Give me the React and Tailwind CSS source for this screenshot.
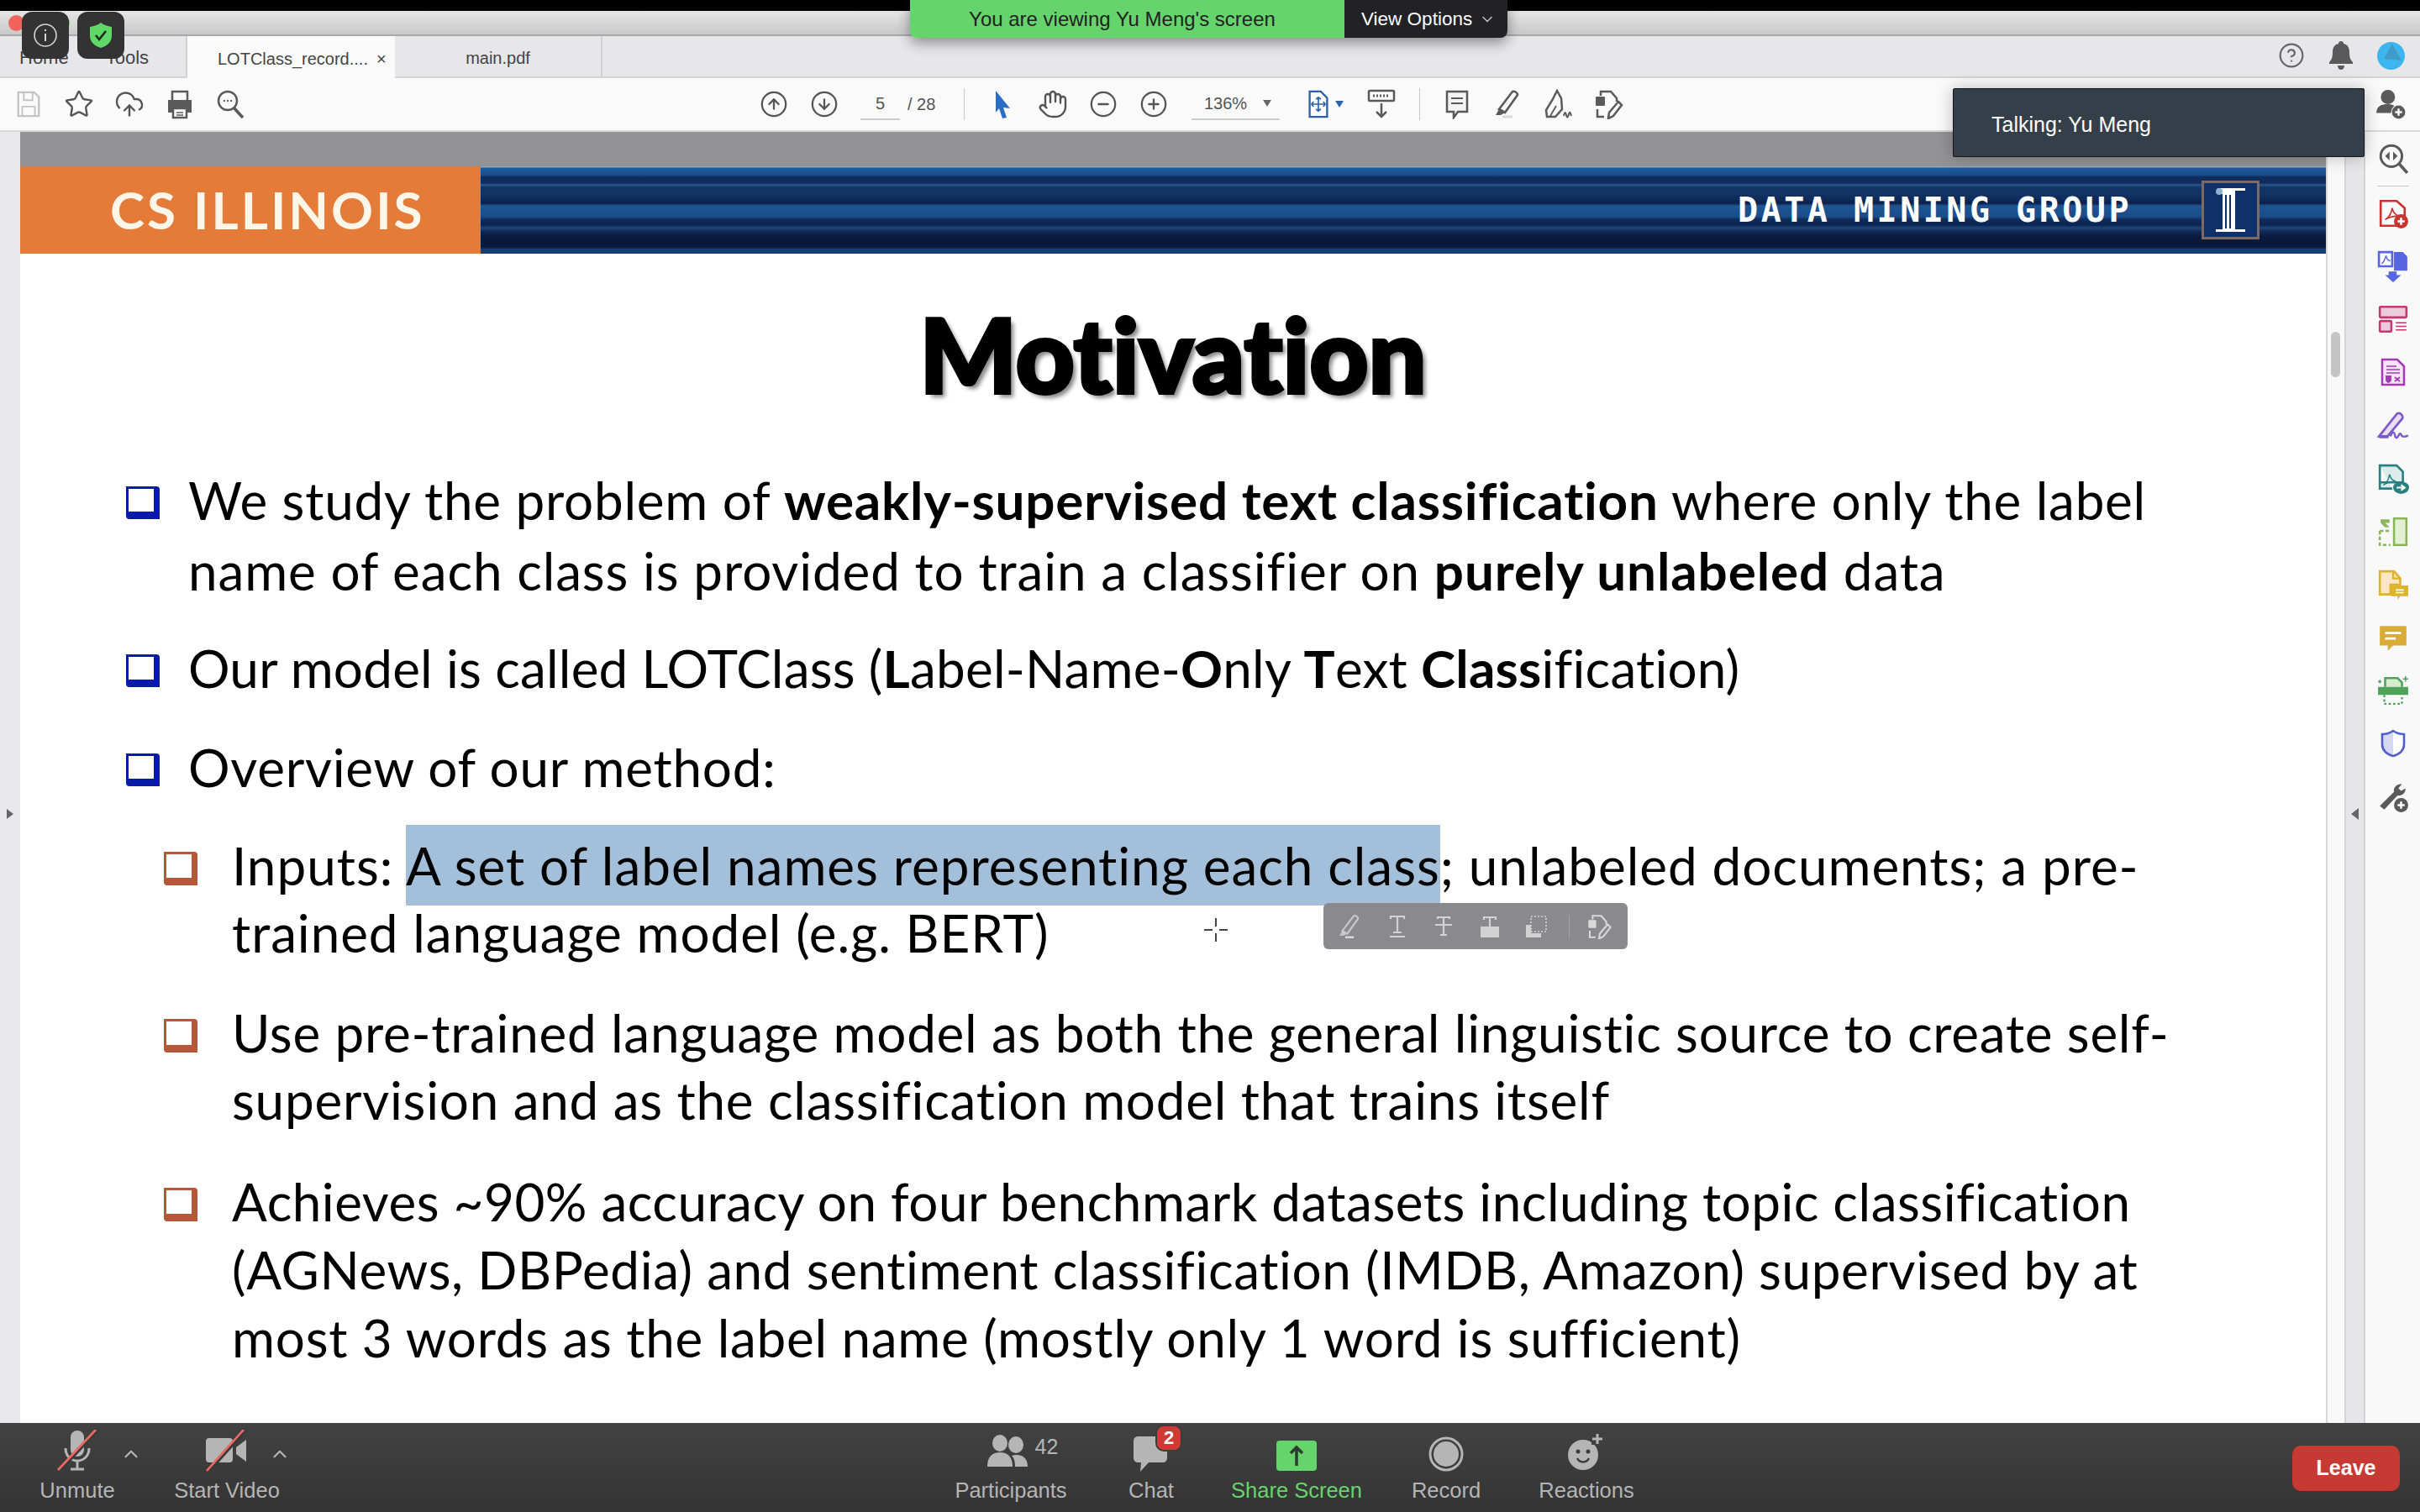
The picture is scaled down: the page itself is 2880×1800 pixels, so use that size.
import React from "react";
import { Star, CloudUpload, CircleArrowUp, CircleArrowDown, Hand, CircleMinus, CirclePlus, ChevronDown, ChevronUp, CircleHelp } from "lucide-react";

const bannerStripes =
  "bg-[linear-gradient(180deg,#8aa8c8_0px,#8aa8c8_1px,#1f5a9c_2px,#1b4f8c_10px,#0f2c5c_13px,#0f2c5c_20px,#2a5a90_22px,#123364_25px,#123364_32px,#0e2a58_40px,#0a1f48_44px,#1d5595_47px,#1a4c88_60px,#0f2c5c_63px,#0c2450_70px,#20457a_73px,#112b58_77px,#0a1a3c_84px,#0a1a3c_96px,#163f74_99px,#163f74_104px)]";

const Svg = ({ size = 36, children, className = "" }) => (
  <svg width={size} height={size} viewBox="0 0 36 36" fill="none" className={className}>
    {children}
  </svg>
);

// pdf toolbar
const SaveIcon = () => (
  <Svg size={34}>
    <path d="M5 3h20l6 6v24H5z" stroke="#c4c4c4" strokeWidth="2.5" />
    <path d="M12 3v10h11V3M10 33V21h16v12" stroke="#c4c4c4" strokeWidth="2" />
  </Svg>
);
const PrintIcon = () => (
  <Svg size={36}>
    <path d="M9 13V3h18v10" stroke="#5a5a5a" strokeWidth="2.5" />
    <path d="M4 13h28v15h-5v-6H9v6H4z" fill="#5a5a5a" />
    <path d="M10 23h16v11H10z" fill="#fff" stroke="#5a5a5a" strokeWidth="2.5" />
    <path d="M14 28h8M14 31h8" stroke="#5a5a5a" strokeWidth="1.5" />
  </Svg>
);
const FindIcon = () => (
  <Svg size={36}>
    <circle cx="15" cy="14" r="11" stroke="#5a5a5a" strokeWidth="2.5" />
    <path d="M22 22l11 12" stroke="#5a5a5a" strokeWidth="3.5" />
    <path d="M10 14h2M14 14h2M18 14h2" stroke="#5a5a5a" strokeWidth="2" />
  </Svg>
);
const CursorIcon = () => (
  <Svg size={36}>
    <path d="M10 2l17 21-8-1 4 12-5 1-4-12-4 5z" fill="#2a6dc4" />
  </Svg>
);
const FitIcon = () => (
  <div className="flex items-center gap-[3px]">
    <Svg size={34}>
      <path d="M7 2h14l8 8v24H7z" fill="#fff" stroke="#2a63a8" strokeWidth="2.5" />
      <path d="M18 9v18M9 18h18M18 9l-3 3M18 9l3 3M18 27l-3-3M18 27l3-3M9 18l3-3M9 18l3 3M27 18l-3-3M27 18l-3 3" stroke="#2a63a8" strokeWidth="1.8" />
    </Svg>
    <span className="w-0 h-0 border-x-[5px] border-x-transparent border-t-[8px] border-t-[#2a63a8]" />
  </div>
);
const KeyboardIcon = () => (
  <Svg size={36}>
    <rect x="3" y="2" width="30" height="12" rx="1" stroke="#5a5a5a" strokeWidth="2.5" />
    <path d="M8 8h20" stroke="#5a5a5a" strokeWidth="3" strokeDasharray="2 2" />
    <path d="M18 17v16M12 27l6 6 6-6" stroke="#5a5a5a" strokeWidth="2.5" />
  </Svg>
);
const CommentIcon = () => (
  <Svg size={36}>
    <path d="M6 3h24v24H19l-5 7v-7H6z" fill="#f4f4f4" stroke="#5a5a5a" strokeWidth="2.5" />
    <path d="M11 11h14M11 17h14" stroke="#5a5a5a" strokeWidth="2" />
  </Svg>
);
const MarkerIcon = ({ color = "#5a5a5a", fill = "none" }) => (
  <Svg size={36}>
    <path d="M8 24L24 3c2-1 6 1 6 4L15 28z" fill={fill} stroke={color} strokeWidth="2.6" />
    <path d="M8 24l7 4-5 3H4z" fill={color} />
    <path d="M12 33h12" stroke="#d8d8d8" strokeWidth="3" />
  </Svg>
);
const SignIcon = () => (
  <Svg size={36}>
    <path d="M17 2l5 9 1 13-8 9H5l-1-8 8-13z" stroke="#5a5a5a" strokeWidth="2.5" />
    <path d="M9 32l7-12" stroke="#5a5a5a" strokeWidth="1.8" />
    <path d="M25 32c1-5 2-5 3-1s2 3 3-1 2-2 3 2" stroke="#5a5a5a" strokeWidth="2" />
  </Svg>
);
const ShareEditIcon = ({ color = "#5a5a5a" }) => (
  <Svg size={36}>
    <rect x="3" y="9" width="11" height="11" rx="1" fill={color} />
    <path d="M9 8V3h12l7 8v4M5 24v9h8" stroke={color} strokeWidth="2.5" />
    <path d="M30 15l4 4-10 13-6 3 1-7z" stroke={color} strokeWidth="2.5" />
  </Svg>
);
const UserPlusIcon = () => (
  <Svg size={38}>
    <circle cx="15" cy="10" r="8" fill="#5a5a5a" />
    <path d="M2 28c0-8 6-10 13-10 3 0 5 .5 7 2l-3 8z" fill="#5a5a5a" />
    <circle cx="27" cy="27" r="8" fill="#5a5a5a" stroke="#fafafa" strokeWidth="1" />
    <path d="M27 23v8M23 27h8" stroke="#fff" strokeWidth="2.2" />
  </Svg>
);

const Vr = () => <div className="w-px h-[38px] bg-[#c8c8c8]" />;

const ToolBtn = ({ children, className = "w-[60px]" }) => (
  <div className={`flex items-center justify-center ${className}`}>{children}</div>
);

// right hand tools column
const sideIcons = [
  <Svg key="a" size={38}>
    <path d="M4 4h18l9 8v20H4z" fill="#fff" stroke="#c8352f" strokeWidth="2.5" />
    <path d="M9 25c4-2 7-7 8-13 1 6 4 8 8 9-5 0-11 1-16 4z" stroke="#c8352f" strokeWidth="1.6" />
    <circle cx="27" cy="27" r="8" fill="#c8352f" />
    <path d="M27 23v8M23 27h8" stroke="#fff" strokeWidth="2.4" />
  </Svg>,
  <Svg key="b" size={38}>
    <path d="M2 2h15v16H2z" fill="#fff" stroke="#5865e0" strokeWidth="2.5" />
    <path d="M19 2h10l5 5v16H19z" fill="#5865e0" />
    <path d="M5 15c3-2 4-5 5-9 1 4 2 5 5 6" stroke="#5865e0" strokeWidth="1.4" />
    <path d="M13 24h9v4h5l-9 8-9-8h4z" fill="#5865e0" />
  </Svg>,
  <Svg key="c" size={38}>
    <rect x="3" y="4" width="30" height="12" rx="1" fill="#eccbdb" stroke="#c8376f" strokeWidth="2.4" />
    <rect x="3" y="20" width="13" height="12" rx="1" fill="#eccbdb" stroke="#c8376f" strokeWidth="2.4" />
    <path d="M21 22h12M21 26h12M21 30h12" stroke="#c8376f" strokeWidth="1.4" />
  </Svg>,
  <Svg key="d" size={36}>
    <path d="M5 3h18l8 8v22H5z" fill="#f3e3f6" stroke="#a43bb5" strokeWidth="2.5" />
    <path d="M10 11h12M10 15h16M10 19h16" stroke="#a43bb5" strokeWidth="1.4" />
    <path d="M10 23h5v5l-2.500 2-2.500-2zM20 24l6 5M26 24l-6 5" stroke="#a43bb5" strokeWidth="1.8" fill="#a43bb5" />
  </Svg>,
  <Svg key="e" size={40}>
    <path d="M3 30L22 6c3-2 7 1 6 5L12 30z" fill="#e8def6" stroke="#7a5ac8" strokeWidth="2.4" />
    <path d="M3 31h10M15 30c3-6 4-5 5-1s3 3 4 0 2-2 3 0 4 2 7 0" stroke="#7a5ac8" strokeWidth="2.2" />
  </Svg>,
  <Svg key="f" size={38}>
    <path d="M3 3h19l7 7v12H3z M3 3v26h14" fill="#dcecec" stroke="#2a8080" strokeWidth="2.5" />
    <path d="M7 25c4-2 6-6 7-12 1 5 3 7 7 8-5 0-10 1-14 4z" stroke="#2a8080" strokeWidth="1.4" />
    <ellipse cx="27" cy="28" rx="9" ry="7" fill="#2a8080" />
    <path d="M22 28h8M27 25l4 3-4 3" stroke="#fff" strokeWidth="2" />
  </Svg>,
  <Svg key="g" size={38}>
    <rect x="19" y="3" width="14" height="30" fill="#e3f0d2" stroke="#8ab55a" strokeWidth="2.4" />
    <path d="M3 17h12M3 17v16h12" stroke="#8ab55a" strokeWidth="2.4" strokeDasharray="4 2.500" />
    <path d="M4 4l10 0v4H9l5 5H9L4 8z" fill="#8ab55a" />
  </Svg>,
  <Svg key="h" size={38}>
    <path d="M3 3h16l7 8v7H15v11H3z" fill="#fbe5c4" stroke="#dcb42e" strokeWidth="2.5" />
    <path d="M18 3v8h8" stroke="#dcb42e" strokeWidth="2.2" />
    <path d="M16 19h19v12H26l-3 4v-4h-7z" fill="#dcb42e" />
    <path d="M21 24h9M21 27h9" stroke="#fff" strokeWidth="1.6" />
  </Svg>,
  <Svg key="i" size={38}>
    <path d="M3 5h30v22H18l-6 6v-6H3z" fill="#d9ac38" />
    <path d="M9 13h18M9 19h12" stroke="#fff" strokeWidth="2.6" />
  </Svg>,
  <Svg key="j" size={38}>
    <path d="M9 14V4h14l5 5v5" fill="#d5eccf" stroke="#4ea25a" strokeWidth="2.4" />
    <path d="M1 14h34v9H1z" fill="#4ea25a" />
    <path d="M8 23v10h20V23" stroke="#4ea25a" strokeWidth="2.2" strokeDasharray="2.500 2.500" />
    <path d="M32 2v6M29 5h6M3 6v4M1 8h4" stroke="#4ea25a" strokeWidth="1.4" />
  </Svg>,
  <Svg key="k" size={36}>
    <path d="M18 3c4 3 8 4 13 4v12c0 8-6 12-13 14z" fill="#fff" />
    <path d="M18 3C14 6 10 7 5 7v12c0 8 6 12 13 14z" fill="#d5d8f2" />
    <path d="M18 3c4 3 8 4 13 4v12c0 8-6 12-13 14-7-2-13-6-13-14V7c5 0 9-1 13-4z" stroke="#5160c8" strokeWidth="2.6" />
  </Svg>,
  <Svg key="l" size={38}>
    <path d="M3 28L19 12c-1-5 3-9 9-9l-4 5 3 3 5-3c0 6-5 9-9 8L8 32z" fill="#5a5a5a" />
    <circle cx="27" cy="27" r="8" fill="#5a5a5a" />
    <path d="M27 23v8M23 27h8" stroke="#fff" strokeWidth="2.4" />
  </Svg>,
];

const Bullet = ({ sub }) =>
  sub ? (
    <span className="shrink-0 mt-[24px] w-[40px] h-[40px] bg-white border-solid border-[#b5573a] border-t-[3px] border-l-[3px] border-r-[7px] border-b-[9px] rounded-bl-[4px] rounded-tr-[4px]" />
  ) : (
    <span className="shrink-0 mt-[26px] w-[40px] h-[39px] bg-white border-solid border-[#0a1aa8] border-t-[3px] border-l-[3px] border-r-[7px] border-b-[9px] rounded-bl-[4px] rounded-tr-[4px]" />
  );

const Item = ({ children, className = "" }) => (
  <div className={`flex gap-[34px] text-[62px] leading-[84px] ${className}`}>
    <Bullet />
    <div className="whitespace-nowrap">{children}</div>
  </div>
);

const SubItem = ({ children, className = "", lead = "leading-[80px]" }) => (
  <div className={`flex gap-[41px] ml-[45px] text-[62px] ${lead} ${className}`}>
    <Bullet sub />
    <div className="whitespace-nowrap">{children}</div>
  </div>
);

// zoom meeting controls
const MicIcon = () => (
  <svg width="48" height="50" viewBox="0 0 48 50" fill="none">
    <rect x="16" y="1" width="16" height="31" rx="8" fill="#b5b5b5" />
    <path d="M10 22c0 20 28 20 28 0M24 36v11M16 47h16" stroke="#b5b5b5" strokeWidth="3" />
    <path d="M2 49L47 1" stroke="#3a3a3a" strokeWidth="5" />
    <path d="M1 48L46 0" stroke="#ee6a63" strokeWidth="2.600" />
  </svg>
);
const VideoIcon = () => (
  <svg width="50" height="50" viewBox="0 0 50 50" fill="none">
    <rect x="0" y="10" width="32" height="29" rx="4" fill="#b5b5b5" />
    <path d="M36 21l12-9v26l-12-9z" fill="#b5b5b5" />
    <path d="M2 50L46 1" stroke="#3a3a3a" strokeWidth="5" />
    <path d="M1 49L45 0" stroke="#ee6a63" strokeWidth="2.600" />
  </svg>
);
const ParticipantsIcon = () => (
  <svg width="50" height="38" viewBox="0 0 50 38" fill="#b5b5b5">
    <ellipse cx="15" cy="10" rx="9" ry="10" />
    <ellipse cx="34" cy="12" rx="9" ry="10" />
    <path d="M0 38c0-12 6-17 15-17s15 5 15 17z" />
    <path d="M33 38c0-6-1-10-4-13 2-1 4-1 6-1 8 0 13 5 13 14z" />
  </svg>
);

const BarItem = ({ className, icon, label, labelClass = "text-[#b5b5b5]" }) => (
  <div className={`flex flex-col items-center ${className}`}>
    <div className="h-[53px] flex items-end justify-center relative">{icon}</div>
    <span className={`mt-[6px] text-[25.500px] leading-[32px] whitespace-nowrap ${labelClass}`}>{label}</span>
  </div>
);

const App = () => {
  return (
    <div className="relative w-[2880px] h-[1800px] overflow-hidden flex flex-col bg-white font-['Liberation_Sans',sans-serif]">
      <div className="h-[13px] bg-black shrink-0" />

      {/* window title bar */}
      <div className="h-[30px] shrink-0 flex items-center gap-[8px] pl-[10px] bg-gradient-to-b from-[#e6e6e6] to-[#c9c9c9] border-b-2 border-[#a9a9a9]">
        <span className="w-[19px] h-[19px] rounded-full bg-[#f2635c]" />
        <span className="w-[19px] h-[19px] rounded-full bg-[#f4bd4f]" />
        <span className="w-[19px] h-[19px] rounded-full bg-[#5fc454]" />
      </div>

      {/* tabs */}
      <div className="h-[50px] shrink-0 flex items-stretch bg-[#e7e7e9] border-b-2 border-[#d4d4d4] text-[20px] text-[#444]">
        <div className="w-[223px] flex items-center gap-[44px] pl-[23px] pt-[2px] text-[22px] border-r-2 border-[#d0d0d0]">
          <span>Home</span>
          <span>Tools</span>
        </div>
        <div className="w-[247px] flex items-center pl-[36px] pt-[4px] gap-[10px] bg-[#fafafa] -mb-[2px]">
          <span>LOTClass_record....</span>
          <span>×</span>
        </div>
        <div className="w-[247px] flex items-center justify-center pt-[4px] border-r-2 border-[#d0d0d0]">main.pdf</div>
        <div className="ml-auto flex items-center gap-[28px] pr-[18px] pb-[2px]">
          <CircleHelp size={32} color="#666" strokeWidth={1.6} />
          <svg width="30" height="34" viewBox="0 0 30 34" fill="#5a5a5a">
            <path d="M15 0c2 0 3 1 3 3 5 1 7 5 7 10 0 6 1 9 4 12v2H1v-2c3-3 4-6 4-12 0-5 2-9 7-10 0-2 1-3 3-3zM11 29h8c0 3-2 5-4 5s-4-2-4-5z" />
          </svg>
          <svg width="33" height="33" viewBox="0 0 33 33">
            <circle cx="16.500" cy="16.500" r="16.500" fill="#3db6f0" />
            <path d="M18 2l11 20-21-2z" fill="#3f9cc9" />
          </svg>
        </div>
      </div>

      {/* pdf toolbar */}
      <div className="h-[64px] shrink-0 flex items-center bg-[#fafafa] border-b-2 border-[#d8d8d8] text-[20px] text-[#555]">
        <div className="flex items-center ml-[4px]">
          <ToolBtn><SaveIcon /></ToolBtn>
          <ToolBtn><Star size={36} strokeWidth={1.6} color="#555" /></ToolBtn>
          <ToolBtn><CloudUpload size={36} strokeWidth={1.6} color="#555" /></ToolBtn>
          <ToolBtn><PrintIcon /></ToolBtn>
          <ToolBtn><FindIcon /></ToolBtn>
        </div>
        <div className="flex items-center ml-[587px]">
          <ToolBtn><CircleArrowUp size={34} strokeWidth={1.6} color="#555" /></ToolBtn>
          <ToolBtn><CircleArrowDown size={34} strokeWidth={1.6} color="#555" /></ToolBtn>
          <div className="ml-[13px] w-[47px] h-[38px] flex items-center justify-center border-b-2 border-[#ccc]">5</div>
          <span className="ml-[9px] w-[50px]">/ 28</span>
          <div className="ml-[17px]"><Vr /></div>
          <ToolBtn className="w-[60px] ml-[15px]"><CursorIcon /></ToolBtn>
          <ToolBtn><Hand size={36} strokeWidth={1.6} color="#555" /></ToolBtn>
          <ToolBtn><CircleMinus size={34} strokeWidth={1.6} color="#555" /></ToolBtn>
          <ToolBtn><CirclePlus size={34} strokeWidth={1.6} color="#555" /></ToolBtn>
          <div className="ml-[15px] w-[105px] h-[38px] flex items-center justify-between pl-[15px] pr-[10px] border-b-2 border-[#ccc]">
            <span>136%</span>
            <span className="w-0 h-0 border-x-[5px] border-x-transparent border-t-[8px] border-t-[#666]" />
          </div>
          <div className="ml-[29px] w-[50px]"><FitIcon /></div>
          <ToolBtn className="w-[60px] ml-[12px]"><KeyboardIcon /></ToolBtn>
          <div className="ml-[15px]"><Vr /></div>
          <ToolBtn className="w-[60px] ml-[14px]"><CommentIcon /></ToolBtn>
          <ToolBtn><MarkerIcon /></ToolBtn>
          <ToolBtn><SignIcon /></ToolBtn>
          <ToolBtn><ShareEditIcon /></ToolBtn>
        </div>
        <div className="ml-auto w-[65px] pr-[5px] flex justify-center"><UserPlusIcon /></div>
      </div>

      {/* document area */}
      <div className="flex-1 min-h-0 flex">
        <div className="w-[24px] shrink-0 flex items-center justify-center bg-[#e8e8ea]">
          <span className="w-0 h-0 border-y-[6px] border-y-transparent border-l-[8px] border-l-[#666] mt-[86px]" />
        </div>
        <div className="flex-1 min-w-0 flex flex-col bg-white text-black font-['Lato',sans-serif] [font-variant-ligatures:none]">
          <div className="h-[41px] bg-[#939294]" />
          <div className={`h-[104px] flex items-stretch ${bannerStripes}`}>
            <div className="w-[548px] bg-[#e57b38] flex items-center pl-[107px] pb-[2px] text-[62px] tracking-[3px] font-bold text-[#fff6ea]">
              CS ILLINOIS
            </div>
            <div className="flex-1 flex items-center justify-end pr-[79px]">
              <span className="mr-[83px] font-['DejaVu_Sans_Mono',monospace] font-bold text-[40px] tracking-[3.500px] text-white">
                DATA MINING GROUP
              </span>
              <div className="w-[69px] h-[70px] border-[3px] border-[#7d6a63] bg-[#0f3068] flex items-center justify-center">
                <svg width="40" height="60" viewBox="0 0 40 60" fill="#fff">
                  <path d="M4 4h33v3H25v46h12v3H2v-3h8V11H4z" />
                  <circle cx="6" cy="8" r="4" fill="#8fb0d0" />
                  <path d="M13 12h2v40h-2zM18 12h2v40h-2z" fill="#0f3068" />
                </svg>
              </div>
            </div>
          </div>

          <div className="flex-1 min-h-0 overflow-hidden pl-[126px]">
            <h1 className="pt-[44px] -ml-[126px] h-[206px] flex justify-center text-[122px] leading-[150px] font-black [-webkit-text-stroke:4px_#000] [text-shadow:5px_5px_5px_#888]">
              Motivation
            </h1>
            <div className="mt-[45px]">
              <Item>
                <span className="tracking-[0.77px]">
                  We study the problem of <b>weakly-supervised text classification</b> where only the label
                </span>
                <br />
                <span className="tracking-[0.89px]">
                  name of each class is provided to train a classifier on <b>purely unlabeled</b> data
                </span>
              </Item>
              <Item className="mt-[32px]">
                <span className="tracking-[0.2px]">
                  Our model is called LOTClass (<b>L</b>abel-Name-<b>O</b>nly <b>T</b>ext <b>Class</b>ification)
                </span>
              </Item>
              <Item className="mt-[34px]">
                <span className="tracking-[0.76px]">Overview of our method:</span>
              </Item>
              <SubItem className="mt-[35px]">
                <span className="tracking-[0.97px]">
                  Inputs: <span className="bg-[#a3bfd9] py-[11px]">A set of label names representing each class</span>; unlabeled documents; a pre-
                </span>
                <br />
                <span className="tracking-[0.92px]">trained language model (e.g. BERT)</span>
              </SubItem>
              <SubItem className="mt-[39px]">
                <span className="tracking-[0.73px]">Use pre-trained language model as both the general linguistic source to create self-</span>
                <br />
                <span className="tracking-[0.75px]">supervision and as the classification model that trains itself</span>
              </SubItem>
              <SubItem className="mt-[41px]" lead="leading-[81px]">
                <span className="tracking-[0.51px]">Achieves ~90% accuracy on four benchmark datasets including topic classification</span>
                <br />
                <span className="tracking-[0.62px]">(AGNews, DBPedia) and sentiment classification (IMDB, Amazon) supervised by at</span>
                <br />
                <span className="tracking-[0.74px]">most 3 words as the label name (mostly only 1 word is sufficient)</span>
              </SubItem>
            </div>
          </div>
        </div>

        {/* scroll track */}
        <div className="w-[22px] shrink-0 bg-[#f8f8f8] border-l-2 border-[#d8d8d8] pt-[238px] pl-[4px]">
          <div className="w-[11px] h-[54px] rounded-full bg-[#c4c4c4]" />
        </div>
        <div className="w-[25px] shrink-0 flex items-center justify-center bg-[#e6e6e8] border-x-2 border-[#d4d4d4]">
          <span className="w-0 h-0 border-y-[7px] border-y-transparent border-r-[9px] border-r-[#666] mt-[86px]" />
        </div>
        <div className="w-[65px] shrink-0 flex flex-col items-center bg-[#f9f9f9]">
          <div className="h-[64px] flex items-center justify-center">
            <Svg size={38}>
              <circle cx="16" cy="15" r="12" stroke="#5a5a5a" strokeWidth="2.800" />
              <path d="M25 24l9 10" stroke="#5a5a5a" strokeWidth="3.500" />
              <path d="M14 10v10l-5-5zM18 10v10l5-5z" fill="#5a5a5a" />
            </Svg>
          </div>
          <div className="w-[38px] h-px bg-[#c8c8c8]" />
          {sideIcons.map((icon) => (
            <div key={icon.key} className="h-[63.200px] flex items-center justify-center">
              {icon}
            </div>
          ))}
        </div>
      </div>

      {/* meeting controls */}
      <div className="h-[106px] shrink-0 flex pt-[5px] bg-gradient-to-b from-[#424242] to-[#343434]">
        <div className="w-[1133px] flex">
          <BarItem className="ml-[48px] w-[88px]" icon={<MicIcon />} label="Unmute" />
          <ChevronUp size={26} color="#b5b5b5" strokeWidth={2} className="ml-[7px] mt-[19px]" />
          <BarItem className="ml-[38px] w-[126px]" icon={<VideoIcon />} label="Start Video" />
          <ChevronUp size={26} color="#b5b5b5" strokeWidth={2} className="-ml-[13px] mt-[19px]" />
        </div>
        <BarItem
          className="w-[140px]"
          icon={
            <div className="flex items-center gap-[7px] pb-[1px] -mr-[28px]">
              <ParticipantsIcon />
              <span className="text-[25px] text-[#b5b5b5] mb-[10px]">42</span>
            </div>
          }
          label="Participants"
        />
        <BarItem
          className="w-[62px] ml-[66px]"
          icon={
            <>
              <svg width="42" height="48" viewBox="0 0 42 48" fill="#b5b5b5">
                <path d="M6 6h28c4 0 6 3 6 7v18c0 4-2 6-6 6H18L8 48l1-11H6c-4 0-6-2-6-6V12c0-4 2-6 6-6z" />
              </svg>
              <span className="absolute -top-[3px] -right-[16px] w-[28px] h-[28px] rounded-[10px] border-[2px] border-[#3c3c3c] bg-[#d03a35] box-content flex items-center justify-center text-[22px] leading-none font-bold text-white">
                2
              </span>
            </>
          }
          label="Chat"
        />
        <BarItem
          className="w-[156px] ml-[64px]"
          icon={
            <div className="w-[48px] h-[36px] mb-[1px] rounded-[4px] bg-[#66d46c] flex items-center justify-center">
              <svg width="20" height="26" viewBox="0 0 20 26" fill="none" stroke="#2e3a2e" strokeWidth="3.500">
                <path d="M10 25V3M3 10l7-7 7 7" />
              </svg>
            </div>
          }
          label="Share Screen"
          labelClass="text-[#66d46c]"
        />
        <BarItem
          className="w-[84px] ml-[58px]"
          icon={
            <svg width="42" height="42" viewBox="0 0 42 42">
              <circle cx="21" cy="21" r="19" fill="none" stroke="#b5b5b5" strokeWidth="3" />
              <circle cx="21" cy="21" r="15" fill="#b5b5b5" />
            </svg>
          }
          label="Record"
        />
        <BarItem
          className="w-[120px] ml-[65px]"
          icon={
            <svg width="44" height="46" viewBox="0 0 44 46">
              <circle cx="18" cy="26" r="18" fill="#b5b5b5" />
              <path d="M11 30c3 6 11 6 14 0" fill="none" stroke="#3c3c3c" strokeWidth="2.500" />
              <circle cx="12" cy="22" r="2.500" fill="#3c3c3c" />
              <circle cx="24" cy="22" r="2.500" fill="#3c3c3c" />
              <path d="M28 0h16v14H28z" fill="#3f3f3f" />
              <path d="M35 1v12M29 7h12" stroke="#b5b5b5" strokeWidth="3" />
            </svg>
          }
          label="Reactions"
        />
        <div className="ml-auto mr-[24px] mt-[22px] w-[128px] h-[54px] rounded-[10px] bg-[#c73a33] flex items-center justify-center text-[25px] font-bold text-white">
          Leave
        </div>
      </div>

      {/* overlays: zoom chrome and selection toolbar */}
      <div className="absolute left-[26px] top-[14px] flex gap-[10px]">
        <div className="w-[56px] h-[56px] rounded-[12px] bg-[#333333] flex items-center justify-center">
          <svg width="30" height="30" viewBox="0 0 30 30" fill="none" stroke="#d5d5d5" strokeWidth="1.600">
            <circle cx="15" cy="15" r="13" />
            <path d="M15 13v9M15 8v2" strokeWidth="2" />
          </svg>
        </div>
        <div className="w-[56px] h-[56px] rounded-[12px] bg-[#333333] flex items-center justify-center">
          <svg width="30" height="32" viewBox="0 0 30 32">
            <path d="M15 1c4 3 8 4 13 5v11c0 7-6 12-13 14C8 29 2 24 2 17V6c5-1 9-2 13-5z" fill="#5fd868" />
            <path d="M9 16l4 5 8-10" fill="none" stroke="#1d2b1d" strokeWidth="2.600" />
          </svg>
        </div>
      </div>

      <div className="absolute left-[1083px] top-0 h-[45px] flex rounded-b-[8px] overflow-hidden shadow-[0_6px_16px_rgba(0,0,0,0.4)]">
        <div className="w-[517px] pr-[12px] bg-[#66d46c] flex items-center justify-center text-[24px] text-[#222]">You are viewing Yu Meng's screen</div>
        <div className="w-[194px] bg-[#222224] flex items-center gap-[8px] pl-[20px] text-[22.500px] text-white">
          View Options
          <ChevronDown size={20} color="#bbb" />
        </div>
      </div>

      <div className="absolute left-[2324px] top-[105px] w-[490px] h-[82px] flex items-center pl-[45px] pt-[6px] rounded-[2px] bg-[#353f4a] border border-[#15191d] shadow-[0_0_20px_rgba(0,0,0,0.25)] text-[25px] text-white">
        Talking: Yu Meng
      </div>

      <div className="absolute left-[1575px] top-[1075px] w-[362px] h-[55px] flex items-center rounded-[6px] bg-[#8a898b] pl-[13px] gap-[23px]">
        <div className="scale-[0.85]"><MarkerIcon color="#c8c8c8" /></div>
        <svg width="32" height="32" viewBox="0 0 32 32" fill="none" stroke="#d2d2d2" strokeWidth="2.200">
          <path d="M8 7V4h16v3M16 4v19M11 23h10M7 28h18" />
        </svg>
        <svg width="32" height="32" viewBox="0 0 32 32" fill="none" stroke="#d2d2d2" strokeWidth="2.200">
          <path d="M9 7V5h14v2M16 5v21M12 26h8M6 14h20" />
        </svg>
        <svg width="32" height="32" viewBox="0 0 32 32" fill="#d2d2d2">
          <path d="M5 16h22v13H5z" />
          <path d="M9 8V5h14v3M16 5v11" fill="none" stroke="#d2d2d2" strokeWidth="2.200" />
        </svg>
        <svg width="32" height="32" viewBox="0 0 32 32" fill="none">
          <path d="M4 14h6v10h12v5H4z" fill="#d2d2d2" />
          <rect x="10" y="4" width="18" height="18" stroke="#d2d2d2" strokeWidth="1.600" strokeDasharray="2 2" />
        </svg>
        <div className="w-px h-[28px] bg-[#a5a5a5]" />
        <div className="scale-[0.85] -ml-[6px]"><ShareEditIcon color="#d8d8d8" /></div>
      </div>

      <svg className="absolute left-[1433px] top-[1093px]" width="28" height="28" viewBox="0 0 28 28" stroke="#444" strokeWidth="2">
        <path d="M14 0v10M14 18v10M0 14h10M18 14h10" />
      </svg>
    </div>
  );
};

export default App;
